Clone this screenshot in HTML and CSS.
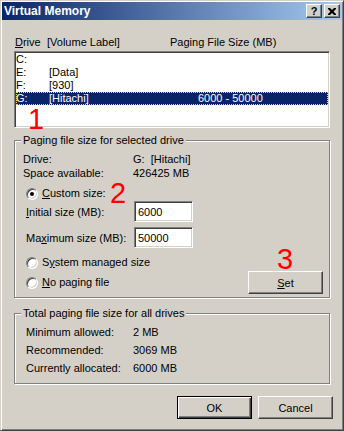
FILE: index.html
```html
<!DOCTYPE html>
<html lang="en">
<head>
<meta charset="UTF-8">
<meta name="viewport" content="width=device-width, initial-scale=1.0">
<title>Virtual Memory</title>
<link rel="stylesheet" href="styles.css">
</head>
<body>

<div class="window">
    <div class="titlebar">
        <span class="title">Virtual Memory</span>
        <div class="caption-buttons">
            <span class="cap-btn help">?</span>
            <span class="cap-btn close">
                <svg width="8" height="7" viewBox="0 0 8 7"><path d="M0 0h2l2 2 2-2h2v1l-2.5 2.5 2.5 2.5v1h-2l-2-2-2 2h-2v-1l2.5-2.5-2.5-2.5z" fill="#000"/></svg>
            </span>
        </div>
    </div>

    <div class="content">
        <div class="list-head">
            <span class="col-drive"><u>D</u>rive</span>
            <span class="col-label">[Volume Label]</span>
            <span class="col-size">Paging File Size (MB)</span>
        </div>
        <div class="listbox">
            <div class="row"><span class="col-drive">C:</span><span class="col-label"></span><span class="col-size"></span></div>
            <div class="row"><span class="col-drive">E:</span><span class="col-label">[Data]</span><span class="col-size"></span></div>
            <div class="row"><span class="col-drive">F:</span><span class="col-label">[930]</span><span class="col-size"></span></div>
            <div class="row selected"><span class="col-drive">G:</span><span class="col-label">[Hitachi]</span><span class="col-size">6000 - 50000</span></div>
        </div>

        <div class="group group-drive">
            <div class="group-title">Paging file size for selected drive</div>
            <div class="info-row first"><span class="key">Drive:</span><span class="val">G:&nbsp;&nbsp;[Hitachi]</span></div>
            <div class="info-row"><span class="key">Space available:</span><span class="val">426425 MB</span></div>
            <div class="radio-row custom"><span class="radio checked"></span><span><u>C</u>ustom size:</span></div>
            <div class="field-row initial"><span class="key"><u>I</u>nitial size (MB):</span><input class="field" type="text" value="6000"></div>
            <div class="field-row maximum"><span class="key">Ma<u>x</u>imum size (MB):</span><input class="field" type="text" value="50000"></div>
            <div class="bottom-row">
                <div class="radios">
                    <div class="radio-row"><span class="radio"></span><span>S<u>y</u>stem managed size</span></div>
                    <div class="radio-row second"><span class="radio"></span><span><u>N</u>o paging file</span></div>
                </div>
                <button class="btn set"><u>S</u>et</button>
            </div>
        </div>

        <div class="group group-total">
            <div class="group-title">Total paging file size for all drives</div>
            <div class="total-rows">
                <div class="total-row"><span class="key">Minimum allowed:</span><span>2 MB</span></div>
                <div class="total-row"><span class="key">Recommended:</span><span>3069 MB</span></div>
                <div class="total-row"><span class="key">Currently allocated:</span><span>6000 MB</span></div>
            </div>
        </div>

        <div class="dialog-buttons">
            <button class="btn default">OK</button>
            <button class="btn">Cancel</button>
        </div>
    </div>

    <span class="mark mark-1">1</span>
    <span class="mark mark-2">2</span>
    <span class="mark mark-3">3</span>
</div>

</body>
</html>
```

FILE: styles.css
```css
body {
    margin: 0;
    font-family: "Liberation Sans", Arial, sans-serif;
    font-size: 11px;
    color: #000;
}
.window {
    position: relative;
    box-sizing: border-box;
    width: 344px;
    height: 431px;
    padding: 1px;
    background: #d4d0c8;
    border: 1px solid;
    border-color: #d4d0c8 #404040 #404040 #d4d0c8;
    box-shadow: inset 1px 1px #fff, inset -1px -1px #808080;
}
.titlebar {
    display: flex;
    align-items: center;
    justify-content: space-between;
    height: 18px;
    padding: 0 2px;
    background: linear-gradient(to right, #0a246a, #a6caf0);
}
.title {
    color: #fff;
    font-weight: bold;
    font-size: 12px;
}
.caption-buttons {
    display: flex;
    gap: 2px;
}
.cap-btn {
    box-sizing: border-box;
    display: flex;
    align-items: center;
    justify-content: center;
    width: 16px;
    height: 14px;
    background: #d4d0c8;
    border: 1px solid;
    border-color: #fff #404040 #404040 #fff;
    box-shadow: inset -1px -1px #808080;
    font-weight: bold;
    font-size: 11px;
    line-height: 12px;
}
.content {
    padding: 16px 9px 0 12px;
}
.list-head {
    display: flex;
    line-height: 13px;
    padding-left: 1px;
}
.list-head .col-drive { width: 32px; }
.list-head .col-label { width: 123px; }
.listbox {
    box-sizing: border-box;
    height: 77px;
    margin: 2px 3px 0 0;
    background: #fff;
    border: 1px solid;
    border-color: #808080 #fff #fff #808080;
    box-shadow: inset 1px 1px #404040, inset -1px -1px #d4d0c8;
    padding: 1px;
}
.row {
    display: flex;
    height: 13px;
    line-height: 13px;
}
.row .col-drive { width: 33px; }
.row .col-label { width: 149px; }
.row.selected {
    background: #0a246a;
    color: #fff;
    outline: 1px dotted #e8d870;
    outline-offset: -1px;
}
.group {
    margin-right: 3px;
    padding: 0 6px 0 8px;
    border: 1px solid #808080;
    box-shadow: inset 1px 1px #fff, 1px 1px #fff;
}
.group-title {
    width: max-content;
    margin: -7px 0 0 -2px;
    padding: 0 2px;
    line-height: 13px;
    background: #d4d0c8;
}
.group-drive {
    margin-top: 12px;
    padding-bottom: 3px;
}
.info-row {
    display: flex;
    height: 14px;
    line-height: 14px;
}
.info-row.first { margin-top: 5px; }
.info-row .key { width: 110px; }
.radio-row {
    display: flex;
    align-items: center;
    height: 13px;
    line-height: 13px;
    padding-left: 3px;
}
.radio-row.custom { margin-top: 7px; }
.radio-row.second { margin-top: 7px; }
.radio {
    box-sizing: border-box;
    display: flex;
    align-items: center;
    justify-content: center;
    width: 12px;
    height: 12px;
    margin-right: 4px;
    border-radius: 50%;
    background: #fff;
    border: 1px solid;
    border-color: #808080 #fff #fff #808080;
    box-shadow: inset 1px 1px #404040, inset -1px -1px #d4d0c8;
}
.radio.checked::after {
    content: "";
    width: 4px;
    height: 4px;
    border-radius: 50%;
    background: #000;
}
.field-row {
    display: flex;
    align-items: center;
    padding-left: 3px;
}
.field-row.initial { margin-top: 1px; }
.field-row.maximum { margin-top: 5px; }
.field-row .key { width: 108px; }
.field {
    box-sizing: border-box;
    width: 59px;
    height: 21px;
    margin: 0;
    padding: 0 3px;
    font-family: inherit;
    font-size: 11px;
    color: #000;
    background: #fff;
    border: 1px solid;
    border-color: #808080 #fff #fff #808080;
    box-shadow: inset 1px 1px #404040, inset -1px -1px #d4d0c8;
    outline: none;
}
.bottom-row {
    display: flex;
    justify-content: space-between;
    align-items: flex-start;
    margin-top: 8px;
}
.btn {
    box-sizing: border-box;
    width: 75px;
    height: 23px;
    margin: 0;
    padding: 0;
    font-family: inherit;
    font-size: 11px;
    color: #000;
    background: #d4d0c8;
    border: 1px solid;
    border-color: #fff #404040 #404040 #fff;
    box-shadow: inset -1px -1px #808080;
}
.btn.set { margin-top: 15px; }
.btn.default {
    border-color: #000;
    box-shadow: inset 1px 1px #fff, inset -1px -1px #404040, inset -2px -2px #808080;
}
.group-total {
    margin-top: 15px;
    padding-bottom: 6px;
}
.total-rows {
    margin-top: 3px;
    padding-left: 3px;
}
.total-row {
    display: flex;
    height: 18px;
    line-height: 18px;
}
.total-row .key { width: 107px; }
.dialog-buttons {
    display: flex;
    justify-content: flex-end;
    gap: 6px;
    margin-top: 12px;
}
.mark {
    position: absolute;
    color: #ff0000;
    font-size: 29px;
    line-height: 29px;
}
.mark-1 { left: 27px; top: 104px; }
.mark-2 { left: 109px; top: 178px; }
.mark-3 { left: 276px; top: 244px; }
```
